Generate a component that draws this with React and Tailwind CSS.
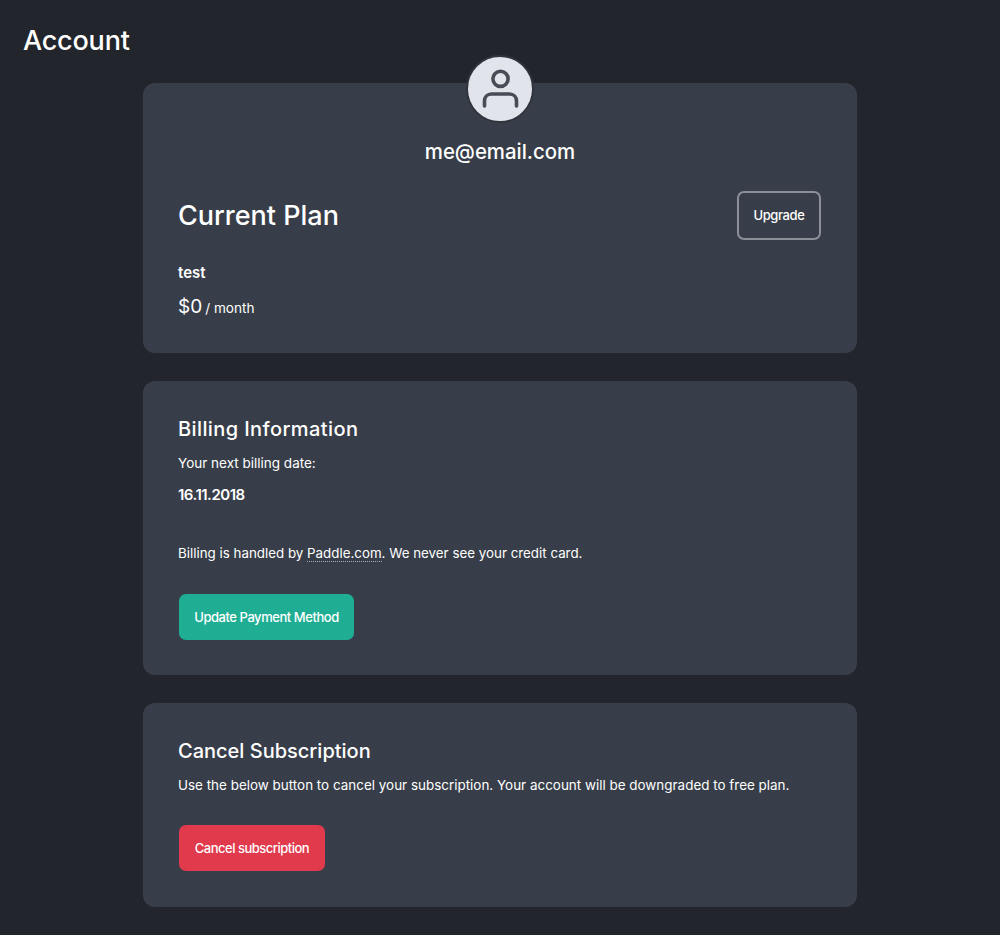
import React from 'react';

const Card = ({ children, className = '' }) => (
  <section className={`relative w-[714px] rounded-[12px] bg-[#383e49] px-[36px] ${className}`}>
    {children}
  </section>
);

const App = () => {
  return (
    <div className="min-h-[935px] bg-[#22252c] font-['Inter',sans-serif] text-white">
      {/* Header */}
      <header className="flex h-[83px] items-start px-[23px] pt-[23px]">
        <h1 className="text-[27px] leading-[36px] font-medium tracking-[-0.2px]">Account</h1>
      </header>

      <main className="flex flex-col items-center gap-[28px]">
        {/* Current plan */}
        <Card className="h-[270px]">
          <div className="absolute -top-[28px] left-1/2 flex h-[68px] w-[68px] -translate-x-1/2 items-center justify-center rounded-full border-2 border-[#30343d] bg-[#e1e4ea]">
            <svg width="40" height="40" viewBox="0 0 40 40" fill="none" stroke="#474c57" strokeWidth="3.6" strokeLinecap="round">
              <circle cx="20.5" cy="9.8" r="7.6" />
              <path d="M4.5 37v-5c0-4 3-7 7-7h18c4 0 7 3 7 7v5" />
            </svg>
          </div>

          <p className="pt-[56px] text-center text-[20.4px] leading-[26px] font-medium">me@email.com</p>

          <div className="mt-[26px] flex items-center justify-between">
            <h2 className="-ml-px text-[27px] leading-[34px] font-medium">Current Plan</h2>
            <button className="h-[49px] w-[84px] rounded-[7px] border-2 border-[#8b8f98] pt-px text-[13px] font-medium tracking-[-0.4px]">
              Upgrade
            </button>
          </div>

          <p className="mt-[23px] -ml-px text-[15px] leading-[20px] font-semibold">test</p>
          <p className="mt-[12px] -ml-px flex items-baseline gap-[3px] leading-[24px]">
            <span className="text-[19px]">$0</span>
            <span className="text-[13.6px]">/ month</span>
          </p>
        </Card>

        {/* Billing */}
        <Card className="h-[294px] pt-[34px]">
          <h2 className="-ml-px text-[20px] leading-[28px] font-medium tracking-[0.4px]">Billing Information</h2>
          <p className="mt-[10px] -ml-px text-[13.5px] leading-[20px]">Your next billing date:</p>
          <p className="mt-[11px] -ml-px text-[15px] leading-[22px] font-semibold tracking-[-0.5px]">16.11.2018</p>
          <p className="mt-[37px] -ml-px text-[13.35px] leading-[20px]">
            Billing is handled by{' '}
            <a className="border-b border-dotted border-[#a9adb4]">Paddle.com</a>. We never see your credit card.
          </p>
          <button className="mt-[31px] h-[46px] w-[175px] rounded-[7px] bg-[#1fae94] pt-px text-[13px] font-medium tracking-[-0.45px]">
            Update Payment Method
          </button>
        </Card>

        {/* Cancel */}
        <Card className="h-[204px] pt-[34px]">
          <h2 className="-ml-px text-[20px] leading-[28px] font-medium">Cancel Subscription</h2>
          <p className="mt-[10px] -ml-px text-[13.45px] leading-[20px]">
            Use the below button to cancel your subscription. Your account will be downgraded to free plan.
          </p>
          <button className="mt-[30px] h-[46px] w-[146px] rounded-[7px] bg-[#e03a4c] pt-px text-[13px] font-medium tracking-[-0.5px]">
            Cancel subscription
          </button>
        </Card>
      </main>
    </div>
  );
};

export default App;
